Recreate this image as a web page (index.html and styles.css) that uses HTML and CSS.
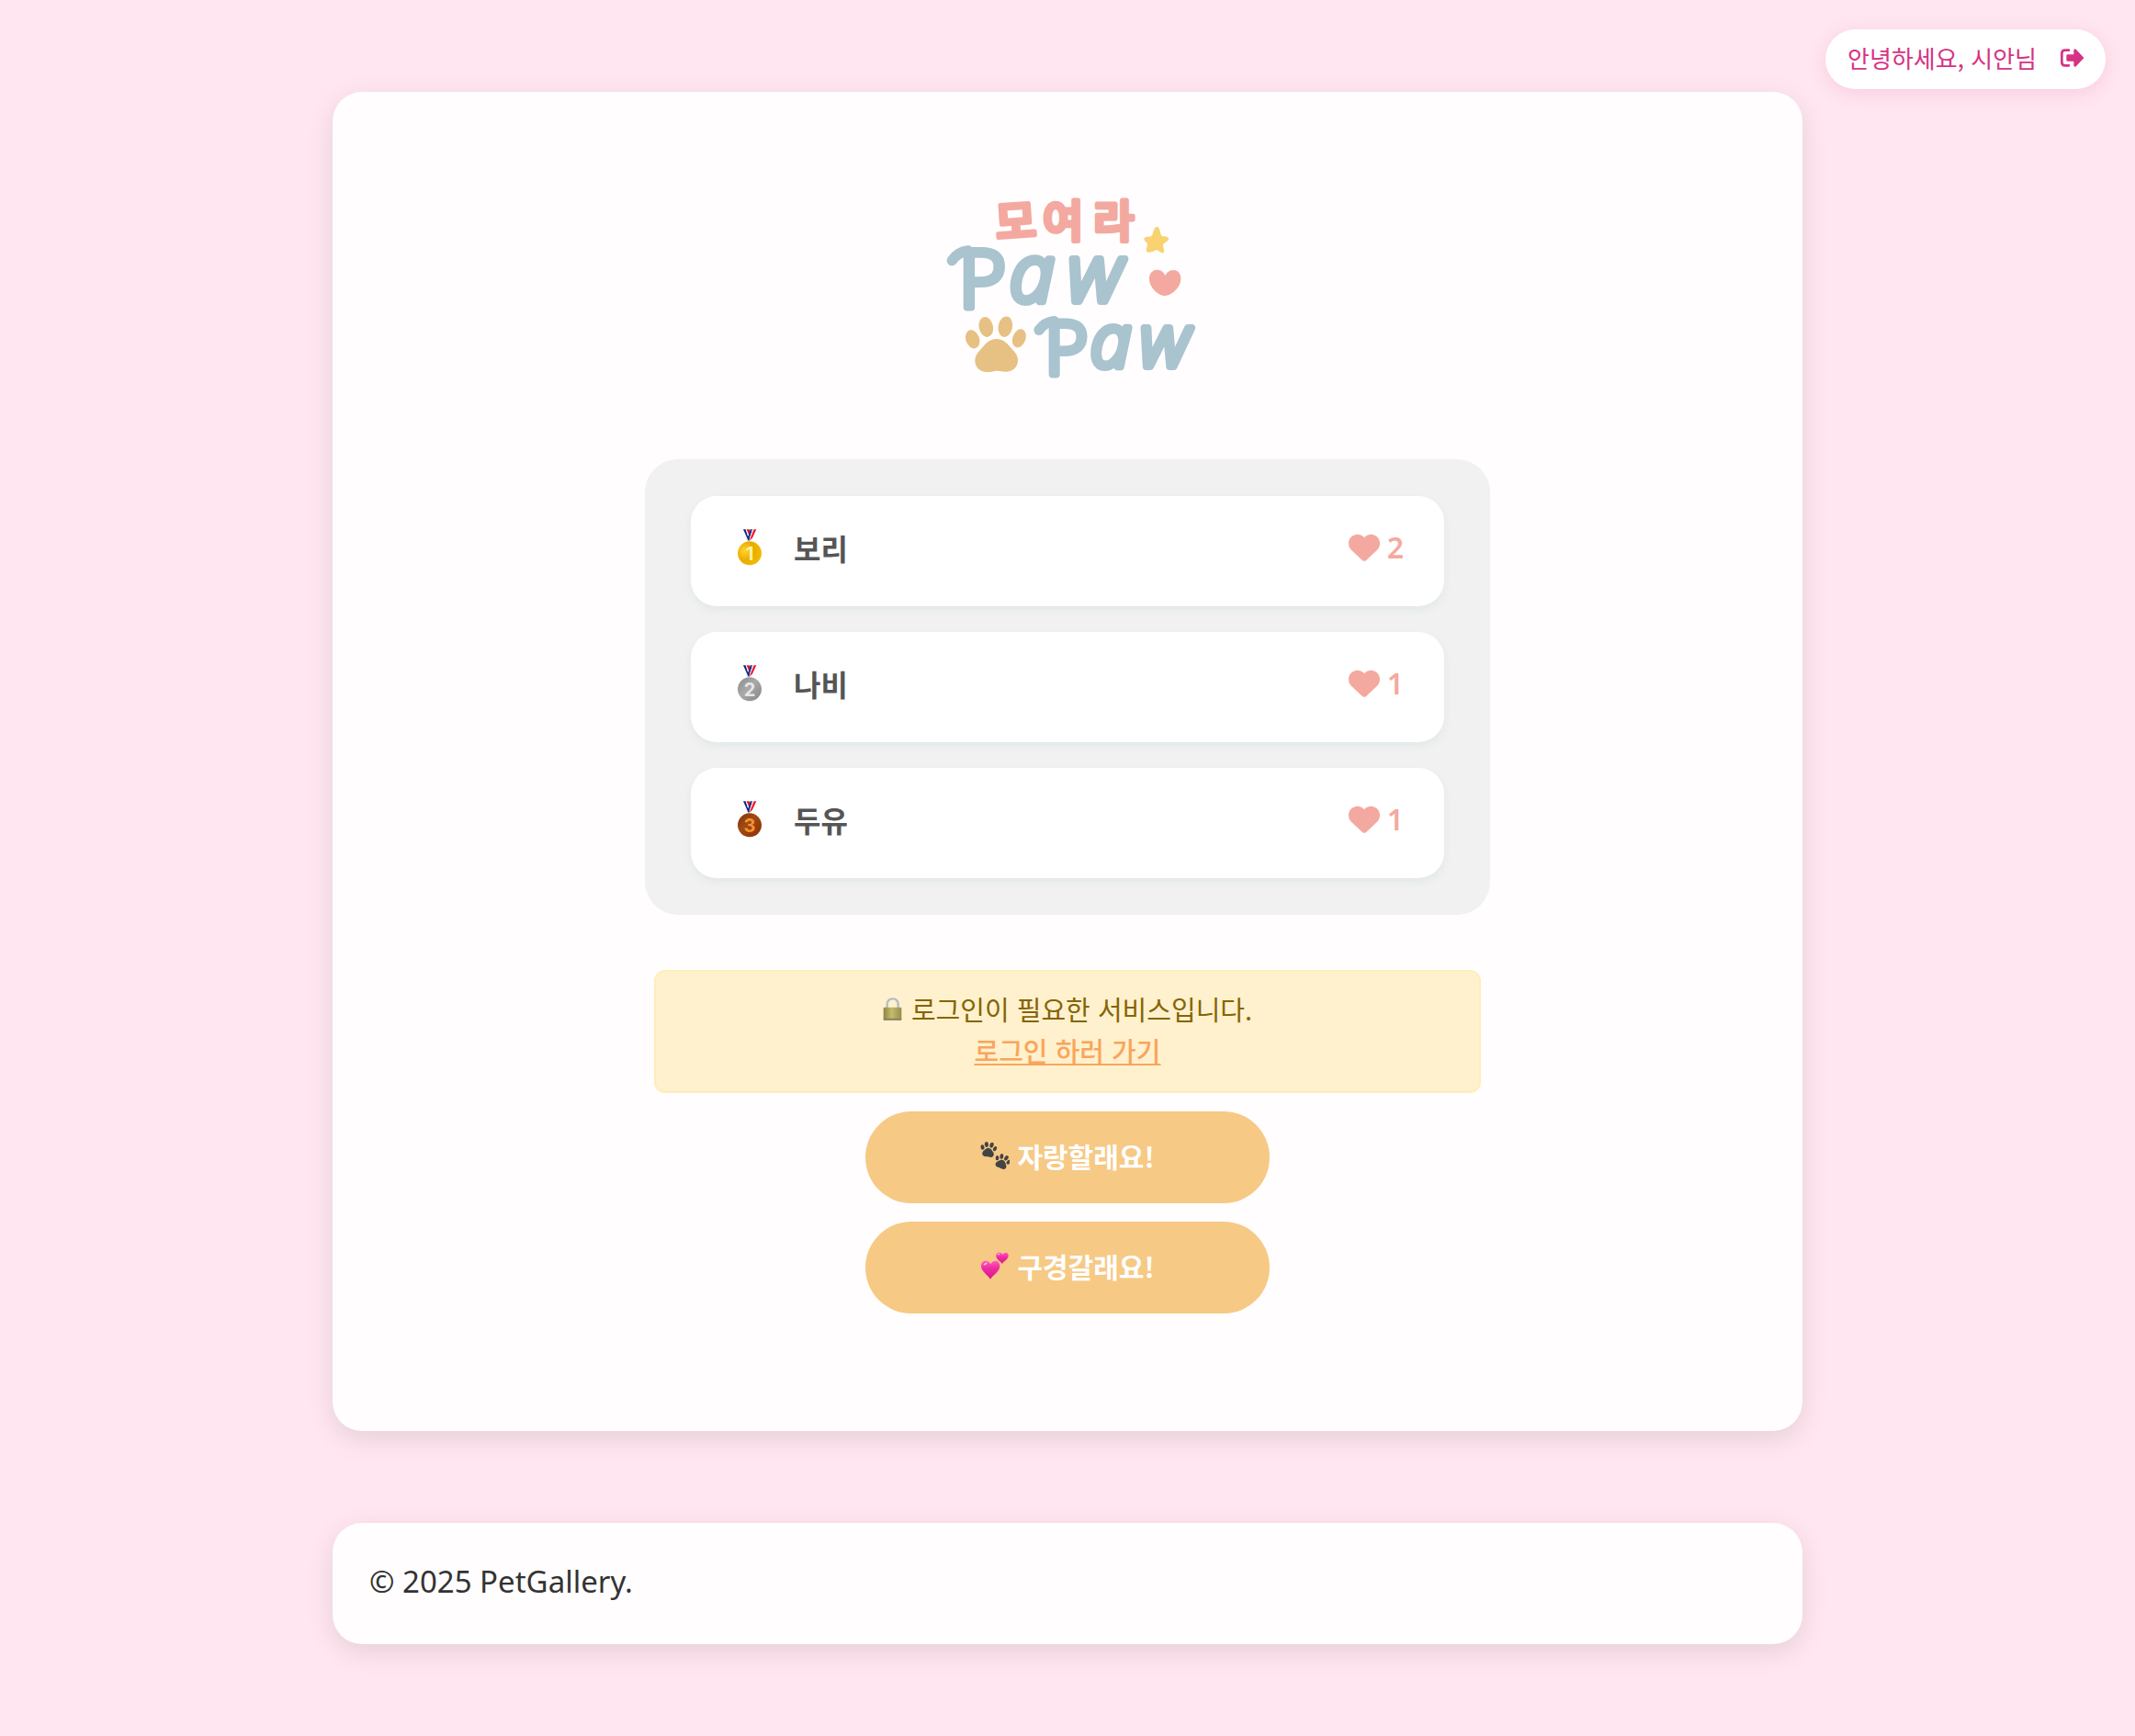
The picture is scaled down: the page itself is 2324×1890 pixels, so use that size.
FILE: index.html
```html
<!DOCTYPE html>
<html lang="ko">
<head>
  <meta charset="UTF-8" />
  <meta name="viewport" content="width=device-width, initial-scale=1.0" />
  <title>PetGallery</title>
  <link rel="stylesheet" href="styles.css">
</head>
<body>
  <!-- Shared icon parts -->
  <svg class="defs" aria-hidden="true">
    <defs>
      <radialGradient id="gold" cx="0.3" cy="0.4" r="0.8">
        <stop offset="0" stop-color="#ffd52e" />
        <stop offset="0.5" stop-color="#e9ac00" />
        <stop offset="1" stop-color="#f2c200" />
      </radialGradient>
      <linearGradient id="silver" x1="0" y1="0" x2="1" y2="1">
        <stop offset="0" stop-color="#8a8a8a" />
        <stop offset="0.45" stop-color="#a9a9a9" />
        <stop offset="1" stop-color="#858585" />
      </linearGradient>
      <linearGradient id="bronze" x1="0" y1="0" x2="1" y2="1">
        <stop offset="0" stop-color="#7a2f08" />
        <stop offset="0.4" stop-color="#a04a12" />
        <stop offset="1" stop-color="#8a3206" />
      </linearGradient>
      <linearGradient id="brass" x1="0" y1="0" x2="1" y2="0">
        <stop offset="0" stop-color="#8f8448" />
        <stop offset="0.45" stop-color="#c4bb6c" />
        <stop offset="1" stop-color="#97904e" />
      </linearGradient>
      <linearGradient id="pink" x1="0" y1="0" x2="0" y2="1">
        <stop offset="0" stop-color="#ff5cb8" />
        <stop offset="0.4" stop-color="#f02ba4" />
        <stop offset="1" stop-color="#d81a84" />
      </linearGradient>
      <symbol id="ribbon" viewBox="0 0 96 130">
        <path d="M27 6h8l14 36h-6z" fill="#14237e" />
        <path d="M35 6h5l5 15-3 7z" fill="#eef" />
        <path d="M38 6h9l3 9-4 10z" fill="#e51c23" />
        <path d="M50 6h7L46 42h-5z" fill="#14237e" />
        <path d="M57 6h5L50 40h-4z" fill="#dfe3f5" />
        <path d="M62 6h8L57 34l-10 9z" fill="#f01c2e" />
      </symbol>
      <symbol id="heart" viewBox="0 0 512 448">
        <path d="M47.600 268.300L228.300 437c7.500 7 17.400 10.900 27.700 10.900s20.200-3.900 27.700-10.900l180.700-168.700c30.400-28.300 47.600-68 47.600-109.500v-5.800c0-69.900-50.500-129.500-119.400-141C347 4.400 300.600 19.300 268 51.900l-12 12-12-12C211.400 19.300 165 4.400 119.400 12 50.500 23.500 0 83.100 0 153v5.800c0 41.500 17.200 81.200 47.600 109.500z" />
      </symbol>
      <symbol id="paw" viewBox="0 0 200 182">
        <ellipse cx="25" cy="75" rx="22" ry="31" transform="rotate(-20 25 75)" />
        <ellipse cx="69" cy="35" rx="23" ry="33" transform="rotate(-12 69 35)" />
        <ellipse cx="132" cy="34" rx="23" ry="34" transform="rotate(10 132 34)" />
        <ellipse cx="177" cy="72" rx="21" ry="31" transform="rotate(20 177 72)" />
        <path d="M103 74c24 0 37 17 50 32 11 12 20 21 20 38 0 25-20 39-44 37-12-2-20-3-27-3s-14 4-26 4c-24 1-43-13-43-36 0-18 9-28 20-40 14-16 27-32 50-32z" />
      </symbol>
    </defs>
  </svg>

  <!-- Login status -->
  <div class="user-info">
    <span>안녕하세요, 시안님</span>
    <button class="logout" type="button" aria-label="로그아웃">
      <svg viewBox="0 0 75 58">
        <path d="M27 4H15C8 4 4 8 4 15v28c0 7 4 11 11 11h12" fill="none" stroke="currentColor" stroke-width="8" stroke-linecap="round" />
        <path d="M23 18h20V5c0-5 5-7 8-3l22 23c3 3 3 5 0 8L51 56c-4 4-8 1-8-3V40H23c-2 0-4-2-4-4V22c0-2 2-4 4-4z" fill="currentColor" />
      </svg>
    </button>
  </div>

  <main class="container">
    <svg class="logo" viewBox="0 0 972 720" role="img" aria-label="모여라 Paw Paw">
      <g class="logo-ko">
        <text x="250" y="206" transform="rotate(-4 316 150)">모</text>
        <text x="405" y="204">여</text>
        <text x="571" y="204">라</text>
      </g>
      <g class="logo-en">
        <path class="swash" d="M109 281Q128 252 162 249" />
        <text x="132" y="436">P</text>
        <text class="slant" x="298" y="414">a</text>
        <text class="slant" x="488" y="414">w</text>
      </g>
      <g class="logo-en small">
        <path class="swash" d="M393 508Q412 482 442 479" />
        <text x="413" y="651">P</text>
        <text class="slant" x="562" y="628">a</text>
        <text class="slant" x="724" y="628">w</text>
      </g>
      <path d="M778 171c7 0 9 8 13 25 2 5 5 6 10 6 16 1 20 8 10 16-11 8-15 9-12 18 4 14 3 19-3 20-6 1-12-8-18-9-5-1-9 4-17 6-17 4-20-2-16-15 3-9 2-13-3-18-10-9-7-17 6-17 10 0 13-1 16-9 5-15 7-23 14-23z" fill="#f9d271" />
      <path d="M805 330c13-27 52-23 51 12-1 28-31 54-52 54s-50-26-51-54c-1-35 39-41 52-12z" fill="#f3a99f" />
      <use href="#paw" x="151" y="463" width="200" height="182" fill="#e7c083" />
    </svg>

    <!-- Ranking -->
    <ol class="ranking">
      <li class="rank-item">
        <svg class="medal" viewBox="0 0 96 130">
          <use href="#ribbon" width="96" height="130" />
          <circle cx="48" cy="84" r="39" fill="url(#gold)" />
          <text x="48" y="106" fill="#fff3a0">1</text>
        </svg>
        <span class="name">보리</span>
        <span class="likes"><svg><use href="#heart" /></svg>2</span>
      </li>
      <li class="rank-item">
        <svg class="medal" viewBox="0 0 96 130">
          <use href="#ribbon" width="96" height="130" />
          <circle cx="48" cy="84" r="39" fill="url(#silver)" />
          <text x="48" y="106" fill="#e6e6e6">2</text>
        </svg>
        <span class="name">나비</span>
        <span class="likes"><svg><use href="#heart" /></svg>1</span>
      </li>
      <li class="rank-item">
        <svg class="medal" viewBox="0 0 96 130">
          <use href="#ribbon" width="96" height="130" />
          <circle cx="48" cy="84" r="39" fill="url(#bronze)" />
          <text x="48" y="106" fill="#f5922f">3</text>
        </svg>
        <span class="name">두유</span>
        <span class="likes"><svg><use href="#heart" /></svg>1</span>
      </li>
    </ol>

    <div class="alert">
      <p>
        <svg class="lock" viewBox="0 0 63 75">
          <path d="M14 36V24C14 10 22 4 32 4s18 6 18 20v12" fill="none" stroke="#b4bcc6" stroke-width="7" />
          <rect x="2" y="32" width="59" height="42" rx="3" fill="url(#brass)" />
          <path d="M2 68h59v3q0 3-3 3H5q-3 0-3-3z" fill="#8c8262" />
        </svg>
        로그인이 필요한 서비스입니다.
      </p>
      <a href="#login">로그인 하러 가기</a>
    </div>

    <button class="btn" type="button">
      <svg viewBox="0 0 96 90" fill="#444">
        <g transform="rotate(8 26 24)"><use href="#paw" x="0" y="0" width="54" height="50" /></g>
        <g transform="rotate(22 72 64)"><use href="#paw" x="46" y="40" width="52" height="48" /></g>
      </svg>
      자랑할래요!
    </button>
    <button class="btn" type="button">
      <svg viewBox="0 0 96 90" fill="url(#pink)">
        <path d="M34 40c7-16 30-14 30 6 0 18-22 30-31 43C25 76 3 64 3 46c0-20 24-22 31-6z" />
        <path d="M73 9c5-11 20-8 19 4-1 12-15 17-20 26-6-8-20-14-20-26 0-13 16-15 21-4z" />
        <ellipse cx="17" cy="39" rx="7" ry="3" fill="#ffb3dc" transform="rotate(-30 17 39)" />
        <ellipse cx="61" cy="7" rx="4" ry="2" fill="#ffb3dc" transform="rotate(-25 61 7)" />
      </svg>
      구경갈래요!
    </button>
  </main>

  <footer class="footer">© 2025 PetGallery.</footer>
</body>
</html>
```
FILE: styles.css
```css
* {
  box-sizing: border-box;
}

body {
  margin: 0;
  padding: 100px 40px;
  background: #ffe6f0;
  color: #333;
  font-family: 'Noto Sans', 'Noto Sans CJK KR', sans-serif;
  font-size: 32px;
  line-height: 52px;
}

.defs {
  position: absolute;
  width: 0;
  height: 0;
}

/* Login status */
.user-info {
  position: absolute;
  top: 32px;
  right: 32px;
  display: flex;
  align-items: center;
  gap: 26px;
  padding: 10px 24px 14px;
  border-radius: 40px;
  background: white;
  box-shadow: 0 4px 20px rgba(214, 51, 132, 0.15);
  color: #d63384;
  font-family: 'Noto Sans CJK KR', sans-serif;
  font-size: 26px;
  line-height: 41px;
}

.logout {
  display: flex;
  padding: 0;
  border: none;
  background: none;
  color: inherit;
  cursor: pointer;
}

.logout svg {
  width: 25px;
  height: 20px;
}

/* Cards */
.container,
.footer {
  max-width: 1600px;
  margin: 0 auto;
  border-radius: 32px;
  background: #fffdfe;
  box-shadow: 0 8px 30px rgba(0, 0, 0, 0.1);
}

.container {
  display: flex;
  flex-direction: column;
  align-items: center;
  gap: 20px;
  padding: 90px 40px 128px;
}

.footer {
  margin-top: 100px;
  padding: 38px 40px 42px;
  font-size: 33px;
}

/* Logo */
.logo {
  width: 324px;
  height: 240px;
  margin-bottom: 50px;
}

.logo text {
  stroke-linejoin: round;
}

.logo-ko {
  fill: #f3a99f;
  stroke: #f3a99f;
  stroke-width: 14px;
  font-family: 'Noto Sans CJK KR', sans-serif;
  font-size: 144px;
  font-weight: 500;
}

.logo-en {
  fill: #a9c3cf;
  stroke: #a9c3cf;
  stroke-width: 24px;
  font-family: 'Open Sans', sans-serif;
  font-size: 260px;
  font-weight: 300;
}

.logo-en.small {
  font-size: 236px;
}

.slant {
  font-style: italic;
}

.swash {
  fill: none;
  stroke-width: 34px;
  stroke-linecap: round;
}

/* Ranking */
.ranking {
  display: flex;
  flex-direction: column;
  gap: 28px;
  width: 100%;
  max-width: 920px;
  margin: 0 0 40px;
  padding: 40px 50px;
  border-radius: 36px;
  background: #f1f1f1;
  list-style: none;
}

.rank-item {
  display: flex;
  align-items: center;
  padding: 30px 44px 38px;
  border-radius: 28px;
  background: white;
  box-shadow: 0 4px 8px rgba(169, 195, 207, 0.2);
  font-family: 'Noto Sans CJK KR', sans-serif;
  font-weight: 700;
}

.medal {
  width: 32px;
  height: 44px;
  margin: 0 32px 0 4px;
  font-size: 60px;
  text-anchor: middle;
}

.medal text {
  font-family: Inter, sans-serif;
}

.name {
  flex: 1;
  color: #555;
}

.likes {
  display: flex;
  align-items: center;
  gap: 8px;
  color: #f4a9a0;
  font-family: 'Noto Sans', sans-serif;
  font-weight: 600;
}

.likes svg {
  width: 34px;
  height: 30px;
  fill: currentColor;
}

/* Login notice */
.alert {
  width: 100%;
  max-width: 900px;
  padding: 18px 20px 22px;
  border: 2px solid #ffeeba;
  border-radius: 12px;
  background: #fff1cd;
  color: #856404;
  font-family: 'Noto Sans CJK KR', sans-serif;
  font-size: 29px;
  line-height: 45px;
  text-align: center;
}

.alert p {
  display: flex;
  justify-content: center;
  align-items: center;
  gap: 10px;
  margin: 0;
}

.alert a {
  display: block;
  color: #f9a55b;
  font-weight: 500;
}

.lock {
  width: 21px;
  height: 25px;
}

/* Buttons */
.btn {
  display: flex;
  justify-content: center;
  align-items: center;
  gap: 8px;
  width: 100%;
  max-width: 440px;
  height: 100px;
  padding: 0 0 4px;
  border: none;
  border-radius: 50px;
  background: #f6c985;
  color: white;
  font-family: 'Noto Sans CJK KR', sans-serif;
  font-size: 30px;
  font-weight: 700;
  cursor: pointer;
}

.btn svg {
  width: 32px;
  height: 30px;
}
```
